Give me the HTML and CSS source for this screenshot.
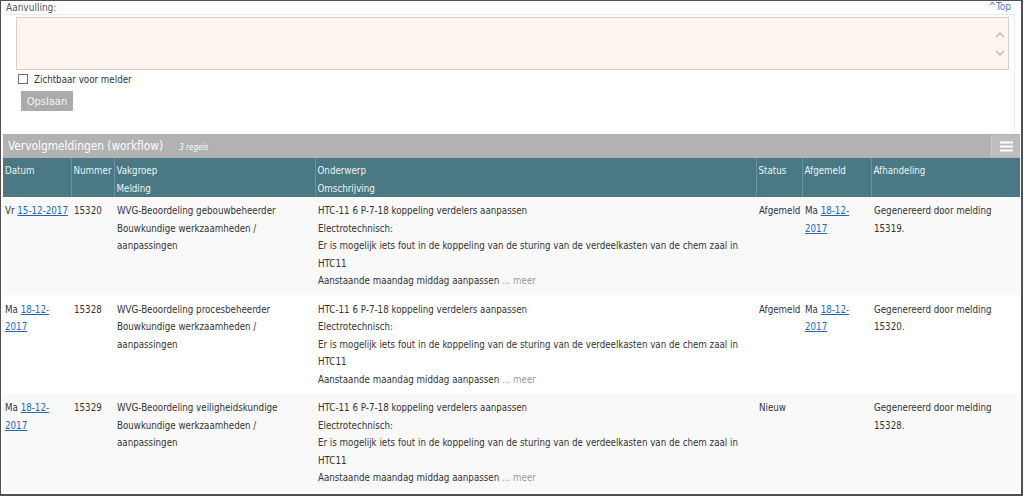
FILE: index.html
```html
<!DOCTYPE html>
<html lang="nl">
<head>
<meta charset="utf-8">
<title>Vervolgmeldingen</title>
<link rel="stylesheet" href="styles.css">
</head>
<body>
<div class="frame">
  <section class="aanvulling">
    <div class="label-row">
      <span class="label">Aanvulling:</span>
      <a class="top-link" href="#">^Top</a>
    </div>
    <div class="form-body">
      <div class="textarea">
        <div class="scroll">
          <svg width="10" height="30" viewBox="0 0 10 30"><path d="M1 8 L5 4 L9 8" fill="none" stroke="#b9b9b9" stroke-width="1.3"/><path d="M1 22 L5 26 L9 22" fill="none" stroke="#b9b9b9" stroke-width="1.3"/></svg>
        </div>
      </div>
      <label class="check"><span class="box"></span>Zichtbaar voor melder</label>
      <button class="btn" type="button">Opslaan</button>
    </div>
  </section>

  <section class="panel">
    <div class="panel-head">
      <span class="panel-title">Vervolgmeldingen (workflow)</span>
      <span class="panel-count">3 regels</span>
      <span class="menu-btn"><svg width="13" height="11" viewBox="0 0 13 11"><rect x="0" y="0.5" width="13" height="2" fill="#fff"/><rect x="0" y="4.5" width="13" height="2" fill="#fff"/><rect x="0" y="8.5" width="13" height="2" fill="#fff"/></svg></span>
    </div>
    <table class="grid">
      <colgroup>
        <col class="c-datum"><col class="c-nummer"><col class="c-vak"><col class="c-onder"><col class="c-status"><col class="c-afg"><col class="c-afh">
      </colgroup>
      <thead>
        <tr>
          <th>Datum</th>
          <th>Nummer</th>
          <th>Vakgroep<br>Melding</th>
          <th>Onderwerp<br>Omschrijving</th>
          <th>Status</th>
          <th>Afgemeld</th>
          <th>Afhandeling</th>
        </tr>
      </thead>
      <tbody>
        <tr class="odd">
          <td>Vr <a href="#">15-12-2017</a></td>
          <td>15320</td>
          <td>WVG-Beoordeling gebouwbeheerder<br>Bouwkundige werkzaamheden / aanpassingen</td>
          <td>HTC-11 6 P-7-18 koppeling verdelers aanpassen<br>Electrotechnisch:<br>Er is mogelijk iets fout in de koppeling van de sturing van de verdeelkasten van de chem zaal in HTC11<br>Aanstaande maandag middag aanpassen <span class="more">... meer</span></td>
          <td>Afgemeld</td>
          <td>Ma <a href="#">18-12-2017</a></td>
          <td>Gegenereerd door melding 15319.</td>
        </tr>
        <tr class="even">
          <td>Ma <a href="#">18-12-2017</a></td>
          <td>15328</td>
          <td>WVG-Beoordeling procesbeheerder<br>Bouwkundige werkzaamheden / aanpassingen</td>
          <td>HTC-11 6 P-7-18 koppeling verdelers aanpassen<br>Electrotechnisch:<br>Er is mogelijk iets fout in de koppeling van de sturing van de verdeelkasten van de chem zaal in HTC11<br>Aanstaande maandag middag aanpassen <span class="more">... meer</span></td>
          <td>Afgemeld</td>
          <td>Ma <a href="#">18-12-2017</a></td>
          <td>Gegenereerd door melding 15320.</td>
        </tr>
        <tr class="odd">
          <td>Ma <a href="#">18-12-2017</a></td>
          <td>15329</td>
          <td>WVG-Beoordeling veiligheidskundige<br>Bouwkundige werkzaamheden / aanpassingen</td>
          <td>HTC-11 6 P-7-18 koppeling verdelers aanpassen<br>Electrotechnisch:<br>Er is mogelijk iets fout in de koppeling van de sturing van de verdeelkasten van de chem zaal in HTC11<br>Aanstaande maandag middag aanpassen <span class="more">... meer</span></td>
          <td>Nieuw</td>
          <td></td>
          <td>Gegenereerd door melding 15328.</td>
        </tr>
      </tbody>
    </table>
  </section>
</div>
</body>
</html>
```

FILE: styles.css
```css
* { box-sizing: border-box; }
html, body { margin: 0; padding: 0; background: #fff; }
body {
  font-family: "DejaVu Sans Condensed", "DejaVu Sans", sans-serif;
  font-stretch: condensed;
  font-size: 9.7px;
  color: #333;
  width: 1024px;
  height: 497px;
  overflow: hidden;
}
.frame {
  width: 1023px;
  height: 496px;
  border: 1px solid #505050;
  border-width: 1px 2px 2px 1px;
  padding: 0 1px 0 2px;
  overflow: hidden;
}

/* Aanvulling */
.aanvulling { padding: 0 5px 0 3px; }
.label-row {
  display: flex;
  justify-content: space-between;
  align-items: flex-end;
  height: 14px;
  border-bottom: 1px solid #ececec;
}
.label { color: #555; font-size: 10px; line-height: 12px; }
.top-link { color: #4f7cc0; text-decoration: none; font-size: 10px; line-height: 14px; margin-right: 4px; }
.form-body {
  border-right: 1px solid #ececec;
  padding: 2px 0 23px 10px;
}
.textarea {
  width: 993px;
  height: 53px;
  background: #fdf4ee;
  border: 1px solid #d6cfc9;
  display: flex;
  justify-content: flex-end;
  align-items: center;
  padding-right: 3px;
}
.scroll { display: flex; width: 10px; }
.check {
  display: flex;
  align-items: center;
  gap: 6px;
  height: 14px;
  margin: 2px 0 0 2px;
  color: #333;
}
.check .box {
  width: 10px;
  height: 10px;
  border: 1px solid #707070;
  background: #fff;
}
.btn {
  display: block;
  margin: 5px 0 0 5px;
  width: 52px;
  height: 20px;
  border: 0;
  background: #ababab;
  color: #f4f4f4;
  font-family: inherit;
  font-stretch: condensed;
  font-size: 11px;
  padding: 0;
}

/* Panel */
.panel-head {
  display: flex;
  align-items: center;
  height: 24px;
  background: #b2b2b2;
  color: #fff;
  padding-left: 5px;
}
.panel-title { font-size: 11.8px; }
.panel-count { font-size: 8px; font-style: italic; margin-left: 16px; margin-top: 2px; }
.menu-btn {
  margin-left: auto;
  width: 29px;
  height: 22px;
  margin-top: 1px;
  align-self: flex-start;
  background: #bdbdbd;
  border-left: 1px solid #c8c8c8;
  display: flex;
  align-items: center;
  justify-content: center;
}

.grid {
  width: 1017px;
  border-collapse: collapse;
  table-layout: fixed;
  line-height: 17.5px;
}
.c-datum { width: 68px; }
.c-nummer { width: 43px; }
.c-vak { width: 201px; }
.c-onder { width: 441px; }
.c-status { width: 46px; }
.c-afg { width: 69px; }
.c-afh { width: 149px; }
.grid thead tr { background: #4a7983; }
.grid th {
  color: #eef4f5;
  font-weight: normal;
  text-align: left;
  vertical-align: top;
  padding: 4px 2px 0 2px;
  border-left: 1px solid #6a959e;
  height: 39px;
}
.grid th:first-child { border-left: 0; }
.grid td {
  vertical-align: top;
  padding: 5px 2px 5px 3px;
  height: 98px;
}
.grid td:first-child { padding-left: 2px; }
.grid tr.odd td { background: #f9f9f9; }
.grid tr.even td { background: #fff; }
.grid tbody tr { border-bottom: 1px solid #fff; }
.grid a { color: #2467b6; }
.more { color: #999; }
```
